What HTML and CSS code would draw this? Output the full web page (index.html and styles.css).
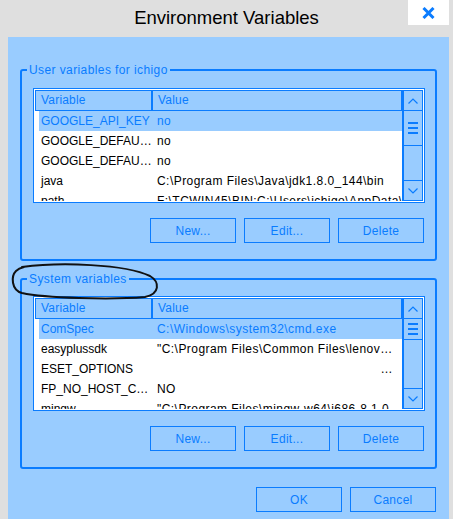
FILE: index.html
```html
<!DOCTYPE html>
<html>
<head>
<meta charset="utf-8">
<title>Environment Variables</title>
<link rel="stylesheet" href="styles.css">
</head>
<body>
<div class="titlebar">
  <div></div>
  <div class="title">Environment Variables</div>
  <div class="close">
    <svg width="13" height="12" viewBox="0 0 13 12"><path d="M1.5 1 L11.5 11 M11.5 1 L1.5 11" stroke="#0a7cff" stroke-width="3" fill="none"/></svg>
  </div>
</div>
<div class="dialog">
  <fieldset class="group">
    <legend class="legend">User variables for ichigo</legend>
    <div class="list">
      <div class="list-body">
        <div class="head"><div class="hc">Variable</div><div class="hc">Value</div></div>
        <div class="row sel"><span class="name">GOOGLE_API_KEY</span><span class="val">no</span></div>
        <div class="row"><span class="name">GOOGLE_DEFAU…</span><span class="val">no</span></div>
        <div class="row"><span class="name">GOOGLE_DEFAU…</span><span class="val">no</span></div>
        <div class="row"><span class="name">java</span><span class="val">C:\Program Files\Java\jdk1.8.0_144\bin</span></div>
        <div class="row"><span class="name">path</span><span class="val">F:\TCWIN45\BIN;C:\Users\ichigo\AppData\Local</span></div>
      </div>
      <div class="scroll">
        <div class="sb up"><svg width="10" height="6" viewBox="0 0 10 6"><path d="M0.5 5.5 L5 1 L9.5 5.5" stroke="#0a7cff" stroke-width="1.2" fill="none"/></svg></div>
        <div class="sb thumb tall"><svg width="10" height="12" viewBox="0 0 10 12"><path d="M0 1h10M0 6h10M0 11h10" stroke="#0a7cff" stroke-width="2"/></svg></div>
        <div class="sb track"></div>
        <div class="sb down"><svg width="10" height="6" viewBox="0 0 10 6"><path d="M0.5 0.5 L5 5 L9.5 0.5" stroke="#0a7cff" stroke-width="1.2" fill="none"/></svg></div>
      </div>
    </div>
    <div class="buttons">
      <button class="btn">New...</button>
      <button class="btn">Edit...</button>
      <button class="btn">Delete</button>
    </div>
  </fieldset>
  <fieldset class="group sys">
    <legend class="legend">System variables</legend>
    <div class="list">
      <div class="list-body">
        <div class="head"><div class="hc">Variable</div><div class="hc">Value</div></div>
        <div class="row sel"><span class="name">ComSpec</span><span class="val">C:\Windows\system32\cmd.exe</span></div>
        <div class="row"><span class="name">easyplussdk</span><span class="val">"C:\Program Files\Common Files\lenov…</span></div>
        <div class="row"><span class="name">ESET_OPTIONS</span><span class="val right">…</span></div>
        <div class="row"><span class="name">FP_NO_HOST_C…</span><span class="val">NO</span></div>
        <div class="row"><span class="name">mingw</span><span class="val">"C:\Program Files\mingw-w64\i686-8.1.0</span></div>
      </div>
      <div class="scroll">
        <div class="sb up"><svg width="10" height="6" viewBox="0 0 10 6"><path d="M0.5 5.5 L5 1 L9.5 5.5" stroke="#0a7cff" stroke-width="1.2" fill="none"/></svg></div>
        <div class="sb thumb short"><svg width="10" height="12" viewBox="0 0 10 12"><path d="M0 1h10M0 6h10M0 11h10" stroke="#0a7cff" stroke-width="2"/></svg></div>
        <div class="sb track"></div>
        <div class="sb down"><svg width="10" height="6" viewBox="0 0 10 6"><path d="M0.5 0.5 L5 5 L9.5 0.5" stroke="#0a7cff" stroke-width="1.2" fill="none"/></svg></div>
      </div>
    </div>
    <div class="buttons">
      <button class="btn">New...</button>
      <button class="btn">Edit...</button>
      <button class="btn">Delete</button>
    </div>
  </fieldset>
  <div class="footer">
    <button class="btn">OK</button>
    <button class="btn">Cancel</button>
  </div>
</div>
<svg class="annot" width="453" height="519" viewBox="0 0 453 519">
  <path d="M22 267 C 60 262, 125 264, 150 276 C 160 282, 160 294, 145 297 C 110 300, 45 298, 22 293 C 11 290, 11 276, 16 271 C 18 269, 20 268, 24 267" stroke="#111" stroke-width="2" fill="none" stroke-linecap="round"/>
</svg>
</body>
</html>
```
FILE: styles.css
```css
* { box-sizing: border-box; }
body {
  margin: 0;
  width: 453px;
  height: 519px;
  overflow: hidden;
  position: relative;
  background: #dfdfdf;
  font-family: "Liberation Sans", Arial, sans-serif;
  font-size: 12px;
  color: #000;
}
.titlebar {
  display: grid;
  grid-template-columns: 45px 1fr 41px;
  height: 37px;
  padding-right: 4px;
}
.title {
  text-align: center;
  font-size: 18.5px;
  line-height: 20px;
  padding-top: 8px;
  color: #000;
}
.close {
  height: 25px;
  background: #fff;
  display: flex;
  align-items: center;
  justify-content: center;
}
.dialog {
  margin: 0 4px 0 8px;
  height: 482px;
  background: #99ccff;
  padding: 0 12px;
  overflow: hidden;
}
.group {
  margin: 26px 0 0;
  padding: 11px 10px 16px 11px;
  border: 2px solid #0a7cff;
  border-radius: 3px;
  min-width: 0;
}
.group.sys {
  margin-top: 11px;
  padding-top: 10px;
}
.legend {
  margin-left: -6px;
  padding: 0 2px;
  color: #0a7cff;
  font-size: 12px;
  line-height: 14px;
  letter-spacing: 0.4px;
}
.list {
  height: 115px;
  border: 1px solid #0a7cff;
  padding: 1px;
  background: #fff;
  display: grid;
  grid-template-columns: 1fr 21px;
  overflow: hidden;
}
.list-body {
  overflow: hidden;
  min-width: 0;
}
.head {
  display: grid;
  grid-template-columns: 117px 1fr;
  height: 21px;
  background: #99ccff;
}
.hc {
  border: 1px solid #0a7cff;
  color: #0a7cff;
  padding-left: 5px;
  line-height: 19px;
  letter-spacing: 0.2px;
}
.row {
  display: grid;
  grid-template-columns: 113px 1fr;
  height: 20px;
  line-height: 20px;
  margin-left: 4px;
  white-space: nowrap;
}
.row.sel {
  background: #99ccff;
  color: #0a7cff;
}
.name {
  padding-left: 2px;
  overflow: hidden;
}
.val {
  padding-left: 5px;
  overflow: hidden;
  letter-spacing: 0.45px;
}
.val.right {
  text-align: right;
  padding-right: 9px;
}
.scroll {
  display: flex;
  flex-direction: column;
  background: #99ccff;
  border-left: 1px solid #0a7cff;
}
.sb {
  border: 1px solid #0a7cff;
  border-top: none;
  display: flex;
  align-items: center;
  justify-content: center;
}
.sb.up {
  height: 21px;
  border-top: 1px solid #0a7cff;
}
.sb.thumb.tall { height: 35px; }
.sb.thumb.short { height: 21px; }
.sb.track { flex: 1; }
.sb.down { height: 20px; }
.buttons {
  display: flex;
  justify-content: flex-end;
  gap: 8px;
  margin-top: 15px;
  padding-right: 1px;
}
.btn {
  width: 86px;
  height: 25px;
  border: 1px solid #0a7cff;
  background: transparent;
  color: #0a7cff;
  font-family: "Liberation Sans", Arial, sans-serif;
  font-size: 12px;
  letter-spacing: 0.3px;
  padding: 0;
}
.footer {
  display: flex;
  justify-content: flex-end;
  gap: 8px;
  margin-top: 18px;
  padding-right: 1px;
}
.annot {
  position: absolute;
  left: 0;
  top: 0;
  pointer-events: none;
}
```
